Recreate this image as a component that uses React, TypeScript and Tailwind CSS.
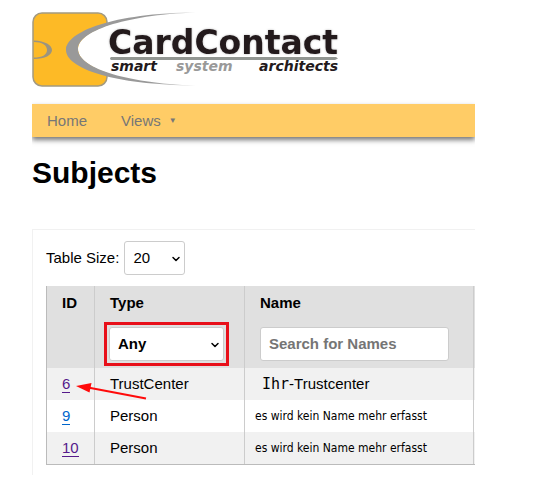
import { useState } from "react";
import { ChevronDown } from "lucide-react";

interface Subject {
  id: number;
  type: string;
  visited: boolean;
}

const subjects: Subject[] = [
  { id: 6, type: "TrustCenter", visited: true },
  { id: 9, type: "Person", visited: false },
  { id: 10, type: "Person", visited: true },
];

function Logo() {
  return (
    <svg
      width="310"
      height="80"
      viewBox="0 0 310 80"
      className="block font-['DejaVu_Sans',Verdana,sans-serif] font-bold"
      role="img"
      aria-label="CardContact smart system architects"
    >
      <defs>
        <linearGradient id="swoosh" x1="0" x2="1">
          <stop offset="0.65" stopColor="#999" />
          <stop offset="1" stopColor="#ddd" />
        </linearGradient>
      </defs>
      <rect x="1" y="3" width="74" height="73" rx="9" fill="#fdba26" stroke="#a39a80" strokeWidth="1.5" />
      <path d="M2 30.5 C13 31 20 35 20 40 C20 45 13 49 2 49 L2 47.5 C10 47.5 15 45 15 40 C15 35 10 32 2 32 Z" fill="#9b9480" />
      <path d="M164 3 C88 4 46 22 46 39 C46 57 88 74 164 75 Z" fill="#fff" />
      <path
        d="M164 2.5 C80 3 34 22 34 40 C34 58 80 75 164 75.5 C90 73 46 57 46 39 C46 22 90 5 164 2.5 Z"
        fill="url(#swoosh)"
      />
      <text x="76" y="44" fontSize="33" fill="#231a1c" className="drop-shadow-[0_0_1px_#bbb]">
        CardContact
      </text>
      <path d="M79 47 H304 L306 48.5 L303 50 H79 Q77 48.5 79 47 Z" fill="#929692" />
      <g fontSize="14" fontStyle="italic">
        <text x="79" y="61" fill="#231a1c">smart</text>
        <text x="144" y="61" textAnchor="start" fill="#999">system</text>
        <text x="306" y="61" textAnchor="end" fill="#231a1c">architects</text>
      </g>
    </svg>
  );
}

function NavBar() {
  return (
    <nav className="flex h-[33px] items-center gap-[34px] bg-[#ffcc66] px-[15px] text-[#777] shadow-[0_3px_5px_#777]">
      <a href="#home">Home</a>
      <a href="#views" className="flex items-center gap-2">
        Views <span className="text-[8px]">▼</span>
      </a>
    </nav>
  );
}

interface SelectBoxProps {
  id: string;
  label?: string;
  options: string[];
  className: string;
}

function SelectBox({ id, label, options, className }: SelectBoxProps) {
  const [value, setValue] = useState(options[0]);

  return (
    <div className="relative">
      <select
        id={id}
        aria-label={label}
        value={value}
        onChange={(e) => setValue(e.target.value)}
        className={`block h-[34px] appearance-none rounded-[3px] border border-[#ccc] bg-white px-2 ${className}`}
      >
        {options.map((option) => (
          <option key={option}>{option}</option>
        ))}
      </select>
      <ChevronDown
        className="pointer-events-none absolute top-3 right-[3px] h-3 w-3 text-black"
        strokeWidth={3}
      />
    </div>
  );
}

function Arrow() {
  return (
    <svg width="72" height="20" viewBox="0 0 72 20" className="pointer-events-none absolute top-[14px] left-[29px]">
      <path d="M12 5.5 L70 16.5" stroke="#ff0a0a" strokeWidth="2" />
      <path d="M0 4 L15.5 1 L13.5 10.5 Z" fill="#ff0a0a" />
    </svg>
  );
}

function SubjectName({ id }: { id: number }) {
  if (id === 6) {
    return (
      <td className="border-r border-[#ccc] pl-[17px]">
        <span className="font-['DejaVu_Sans_Mono',monospace]">Ihr</span>-Trustcenter
      </td>
    );
  }
  return (
    <td className="border-r border-[#ccc] pl-[10px] font-['DejaVu_Sans_Condensed','DejaVu_Sans',sans-serif] text-[12px]">
      es wird kein Name mehr erfasst
    </td>
  );
}

function SubjectTable() {
  return (
    <table className="w-full table-fixed border-separate border-spacing-0 border-b border-l border-[#bbb] text-left">
      <colgroup>
        <col className="w-12" />
        <col className="w-[150px]" />
        <col />
        <col className="w-px" />
      </colgroup>
      <thead className="bg-[#e0e0e0]">
        <tr className="h-[33px]">
          <th className="border-r border-[#ccc] pl-[15px]">ID</th>
          <th className="border-r border-[#ccc] pl-[15px]">Type</th>
          <th className="border-r border-[#ccc] pl-[15px]">Name</th>
          <td />
        </tr>
        <tr className="h-[49px]">
          <td className="border-r border-[#ccc]" />
          <td className="border-r border-[#ccc] pl-[9px] font-bold">
            <div className="w-[125px] border-3 border-[#e8101a] p-[2px]">
              <SelectBox id="type" label="Type" options={["Any", "Person", "TrustCenter"]} className="w-full" />
            </div>
          </td>
          <td className="border-r border-[#ccc] pr-6 pl-[15px]">
            <input
              type="text"
              aria-label="Name"
              placeholder="Search for Names"
              className="block h-[34px] w-full rounded-[3px] border border-[#ccc] bg-white px-2 font-bold placeholder:text-[#757575]"
            />
          </td>
          <td />
        </tr>
      </thead>
      <tbody>
        {subjects.map((subject) => (
          <tr key={subject.id} className="h-8 odd:bg-[#f1f1f1]">
            <td className="relative border-r border-[#ccc] pl-[15px]">
              <a
                href={`#subject-${subject.id}`}
                className={`border-b ${subject.visited ? "border-[#551a8b] text-[#551a8b]" : "border-[#0066cc] text-[#0066cc]"}`}
              >
                {subject.id}
              </a>
              {subject.id === 6 && <Arrow />}
            </td>
            <td className="border-r border-[#ccc] pl-[15px]">{subject.type}</td>
            <SubjectName id={subject.id} />
            <td />
          </tr>
        ))}
      </tbody>
    </table>
  );
}

export default function App() {
  return (
    <div className="bg-white pt-[10px] pr-16 pl-8 font-['Liberation_Sans',Arial,sans-serif] text-[15px] leading-5 text-black">
      <Logo />
      <div className="mt-[14px] overflow-x-clip">
        <NavBar />
      </div>
      <h1 className="mt-4 text-[30px] leading-10 font-bold">Subjects</h1>
      <main className="mt-9 border-t border-l border-[#f1f1f1] pt-[11px] pb-[10px] pl-[13px]">
        <div className="mb-[11px] flex items-center gap-[5px]">
          <label htmlFor="size">Table Size:</label>
          <SelectBox id="size" options={["20", "50", "100"]} className="w-[61px]" />
        </div>
        <SubjectTable />
      </main>
    </div>
  );
}
